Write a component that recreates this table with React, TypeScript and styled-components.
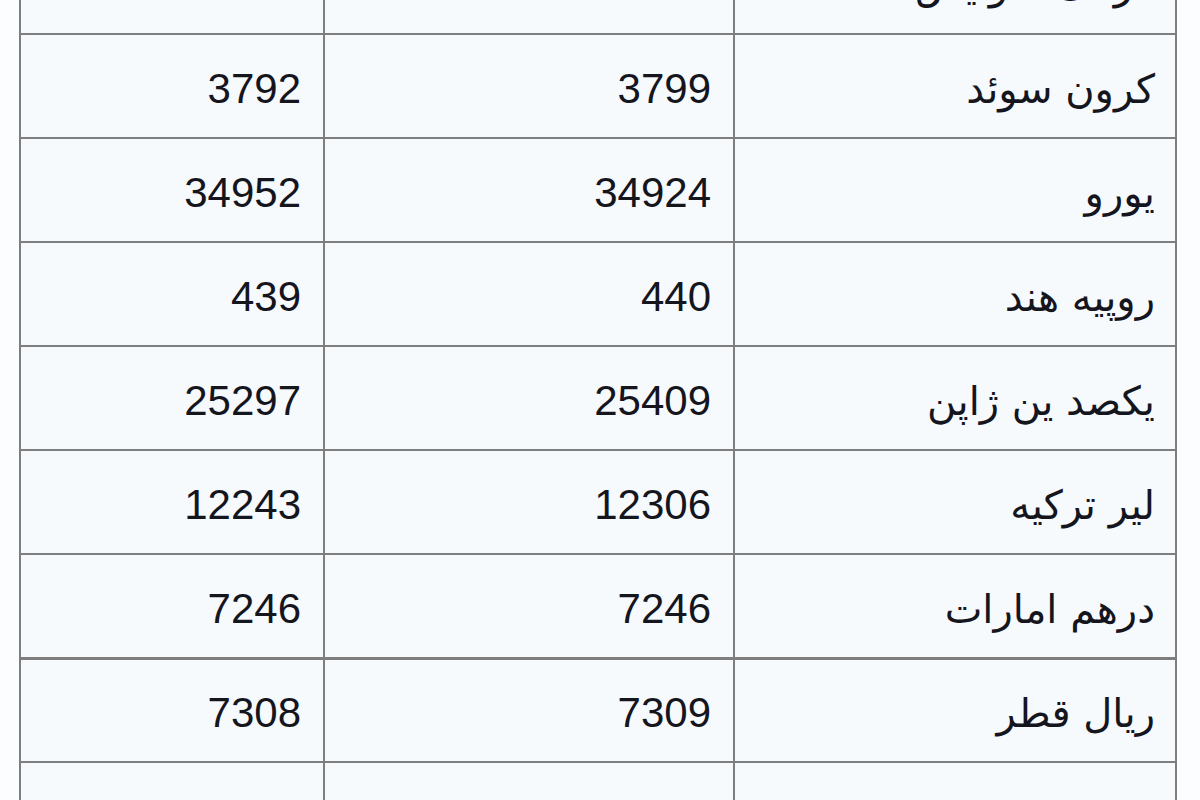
import React from 'react';
import styled, { createGlobalStyle } from 'styled-components';

const GlobalStyle = createGlobalStyle`
  html, body {
    margin: 0;
    padding: 0;
    background: #fcfdff;
    overflow: hidden;
  }
`;

type Rate = { name: string; buy: string; sell: string };

const rates: Rate[] = [
    { name: 'فرانک سوئیس', buy: '20927', sell: '20940' },
    { name: 'کرون سوئد', buy: '3799', sell: '3792' },
    { name: 'یورو', buy: '34924', sell: '34952' },
    { name: 'روپیه هند', buy: '440', sell: '439' },
    { name: 'یکصد ین ژاپن', buy: '25409', sell: '25297' },
    { name: 'لیر ترکیه', buy: '12306', sell: '12243' },
    { name: 'درهم امارات', buy: '7246', sell: '7246' },
    { name: 'ریال قطر', buy: '7309', sell: '7308' },
    { name: 'ریال عمان', buy: '7415', sell: '7411' },
];

const Page = styled.div`
  height: 800px;
  padding-left: 19px;
  overflow: hidden;
`;

const Table = styled.table`
  direction: rtl;
  width: 1156px;
  margin-top: -71px;
  border-collapse: collapse;
  table-layout: fixed;
  background: #f6fafd;
  color: #15151e;
  font-family: 'Liberation Sans', 'DejaVu Sans', sans-serif;
`;

const Tr = styled.tr<{ $heavy?: boolean }>`
  height: 104px;

  td {
    border-top-width: ${(props) => (props.$heavy ? '3px' : '2px')};
  }
`;

const Td = styled.td<{ $name?: boolean }>`
  border: 2px solid #7e7e7e;
  padding: 6px ${(props) => (props.$name ? '20px' : '22px')} 0 0;
  text-align: right;
  vertical-align: middle;
  font-size: ${(props) => (props.$name ? '40px' : '42px')};
  font-family: ${(props) =>
    props.$name ? "'DejaVu Sans', sans-serif" : "'Liberation Sans', sans-serif"};
  white-space: nowrap;
`;

const App: React.FC = () => (
    <>
        <GlobalStyle />
        <Page>
            <Table>
                <colgroup>
                    <col style={{ width: 442 }} />
                    <col style={{ width: 410 }} />
                    <col style={{ width: 304 }} />
                </colgroup>
                <tbody>
                {rates.map((rate, index) => (
                    <Tr key={rate.name} $heavy={index === 7}>
                        <Td $name>{rate.name}</Td>
                        <Td>{rate.buy}</Td>
                        <Td>{rate.sell}</Td>
                    </Tr>
                ))}
                </tbody>
            </Table>
        </Page>
    </>
);

export default App;
